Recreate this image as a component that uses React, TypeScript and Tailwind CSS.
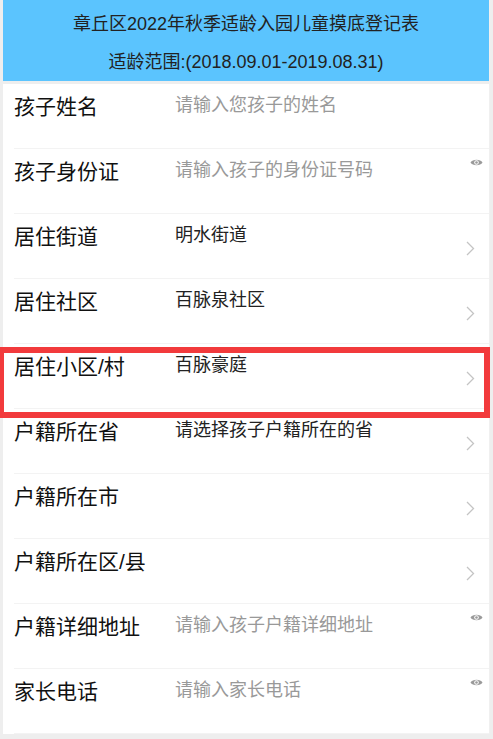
import React from "react";

type Row = {
  label: string;
  value?: string;
  placeholder?: string;
  kind: "input" | "eye" | "select";
};

const rows: Row[] = [
  { label: "孩子姓名", placeholder: "请输入您孩子的姓名", kind: "input" },
  { label: "孩子身份证", placeholder: "请输入孩子的身份证号码", kind: "eye" },
  { label: "居住街道", value: "明水街道", kind: "select" },
  { label: "居住社区", value: "百脉泉社区", kind: "select" },
  { label: "居住小区/村", value: "百脉豪庭", kind: "select" },
  { label: "户籍所在省", value: "请选择孩子户籍所在的省", kind: "select" },
  { label: "户籍所在市", kind: "select" },
  { label: "户籍所在区/县", kind: "select" },
  { label: "户籍详细地址", placeholder: "请输入孩子户籍详细地址", kind: "eye" },
  { label: "家长电话", placeholder: "请输入家长电话", kind: "eye" },
];

function Eye() {
  return (
    <svg width="13" height="9" viewBox="0 0 13 9" className="absolute right-[6px] top-[9px]">
      <path d="M0.5 4.5 C2.5 0.8 10.5 0.8 12.5 4.5 C10.5 8.2 2.5 8.2 0.5 4.5 Z" fill="#9a9a9a" />
      <circle cx="6.5" cy="4.5" r="2.3" fill="#fff" />
      <circle cx="6.5" cy="4.5" r="1.3" fill="#9a9a9a" />
    </svg>
  );
}

function Chevron() {
  return (
    <svg width="9" height="15" viewBox="0 0 9 15" className="absolute right-[14px] top-[27px]">
      <path d="M1 1 L7.5 7.5 L1 14" fill="none" stroke="#c4c4c4" strokeWidth="1.3" />
    </svg>
  );
}

export default function App() {
  return (
    <div
      className="w-[493px] h-[739px] bg-[#eeeeee] overflow-hidden relative"
      style={{ fontFamily: '"Liberation Sans", "Noto Sans CJK SC", sans-serif' }}
    >
      <div className="mx-[3px] bg-white border-r border-[#f0f0f0]">
        <div className="h-[81px] bg-[#5bc4fe] flex flex-col items-center text-[#222] text-[18px]">
          <div className="mt-[13px] leading-[22px]">章丘区2022年秋季适龄入园儿童摸底登记表</div>
          <div className="mt-[16px] leading-[22px]">适龄范围:(2018.09.01-2019.08.31)</div>
        </div>
        <div className="h-[3px] bg-[#eeeeee]" />
        {rows.map((r) => (
          <div key={r.label} className="relative h-[65px] ml-[11px] border-b border-[#f3f3f3] flex">
            <div className="w-[161px] pt-[11px] text-[21px] leading-[24px] text-[#111]">{r.label}</div>
            <div className="pt-[10px] text-[18px] leading-[22px]">
              {r.value ? (
                <span className="text-[#222]">{r.value}</span>
              ) : (
                <span className="text-[#999]">{r.placeholder}</span>
              )}
            </div>
            {r.kind === "eye" && <Eye />}
            {r.kind === "select" && <Chevron />}
          </div>
        ))}
      </div>
      <div className="absolute left-0 top-[347px] w-[490px] h-[71px] border-[6px] border-[#f23a3c] border-l-[4px]" />
    </div>
  );
}
